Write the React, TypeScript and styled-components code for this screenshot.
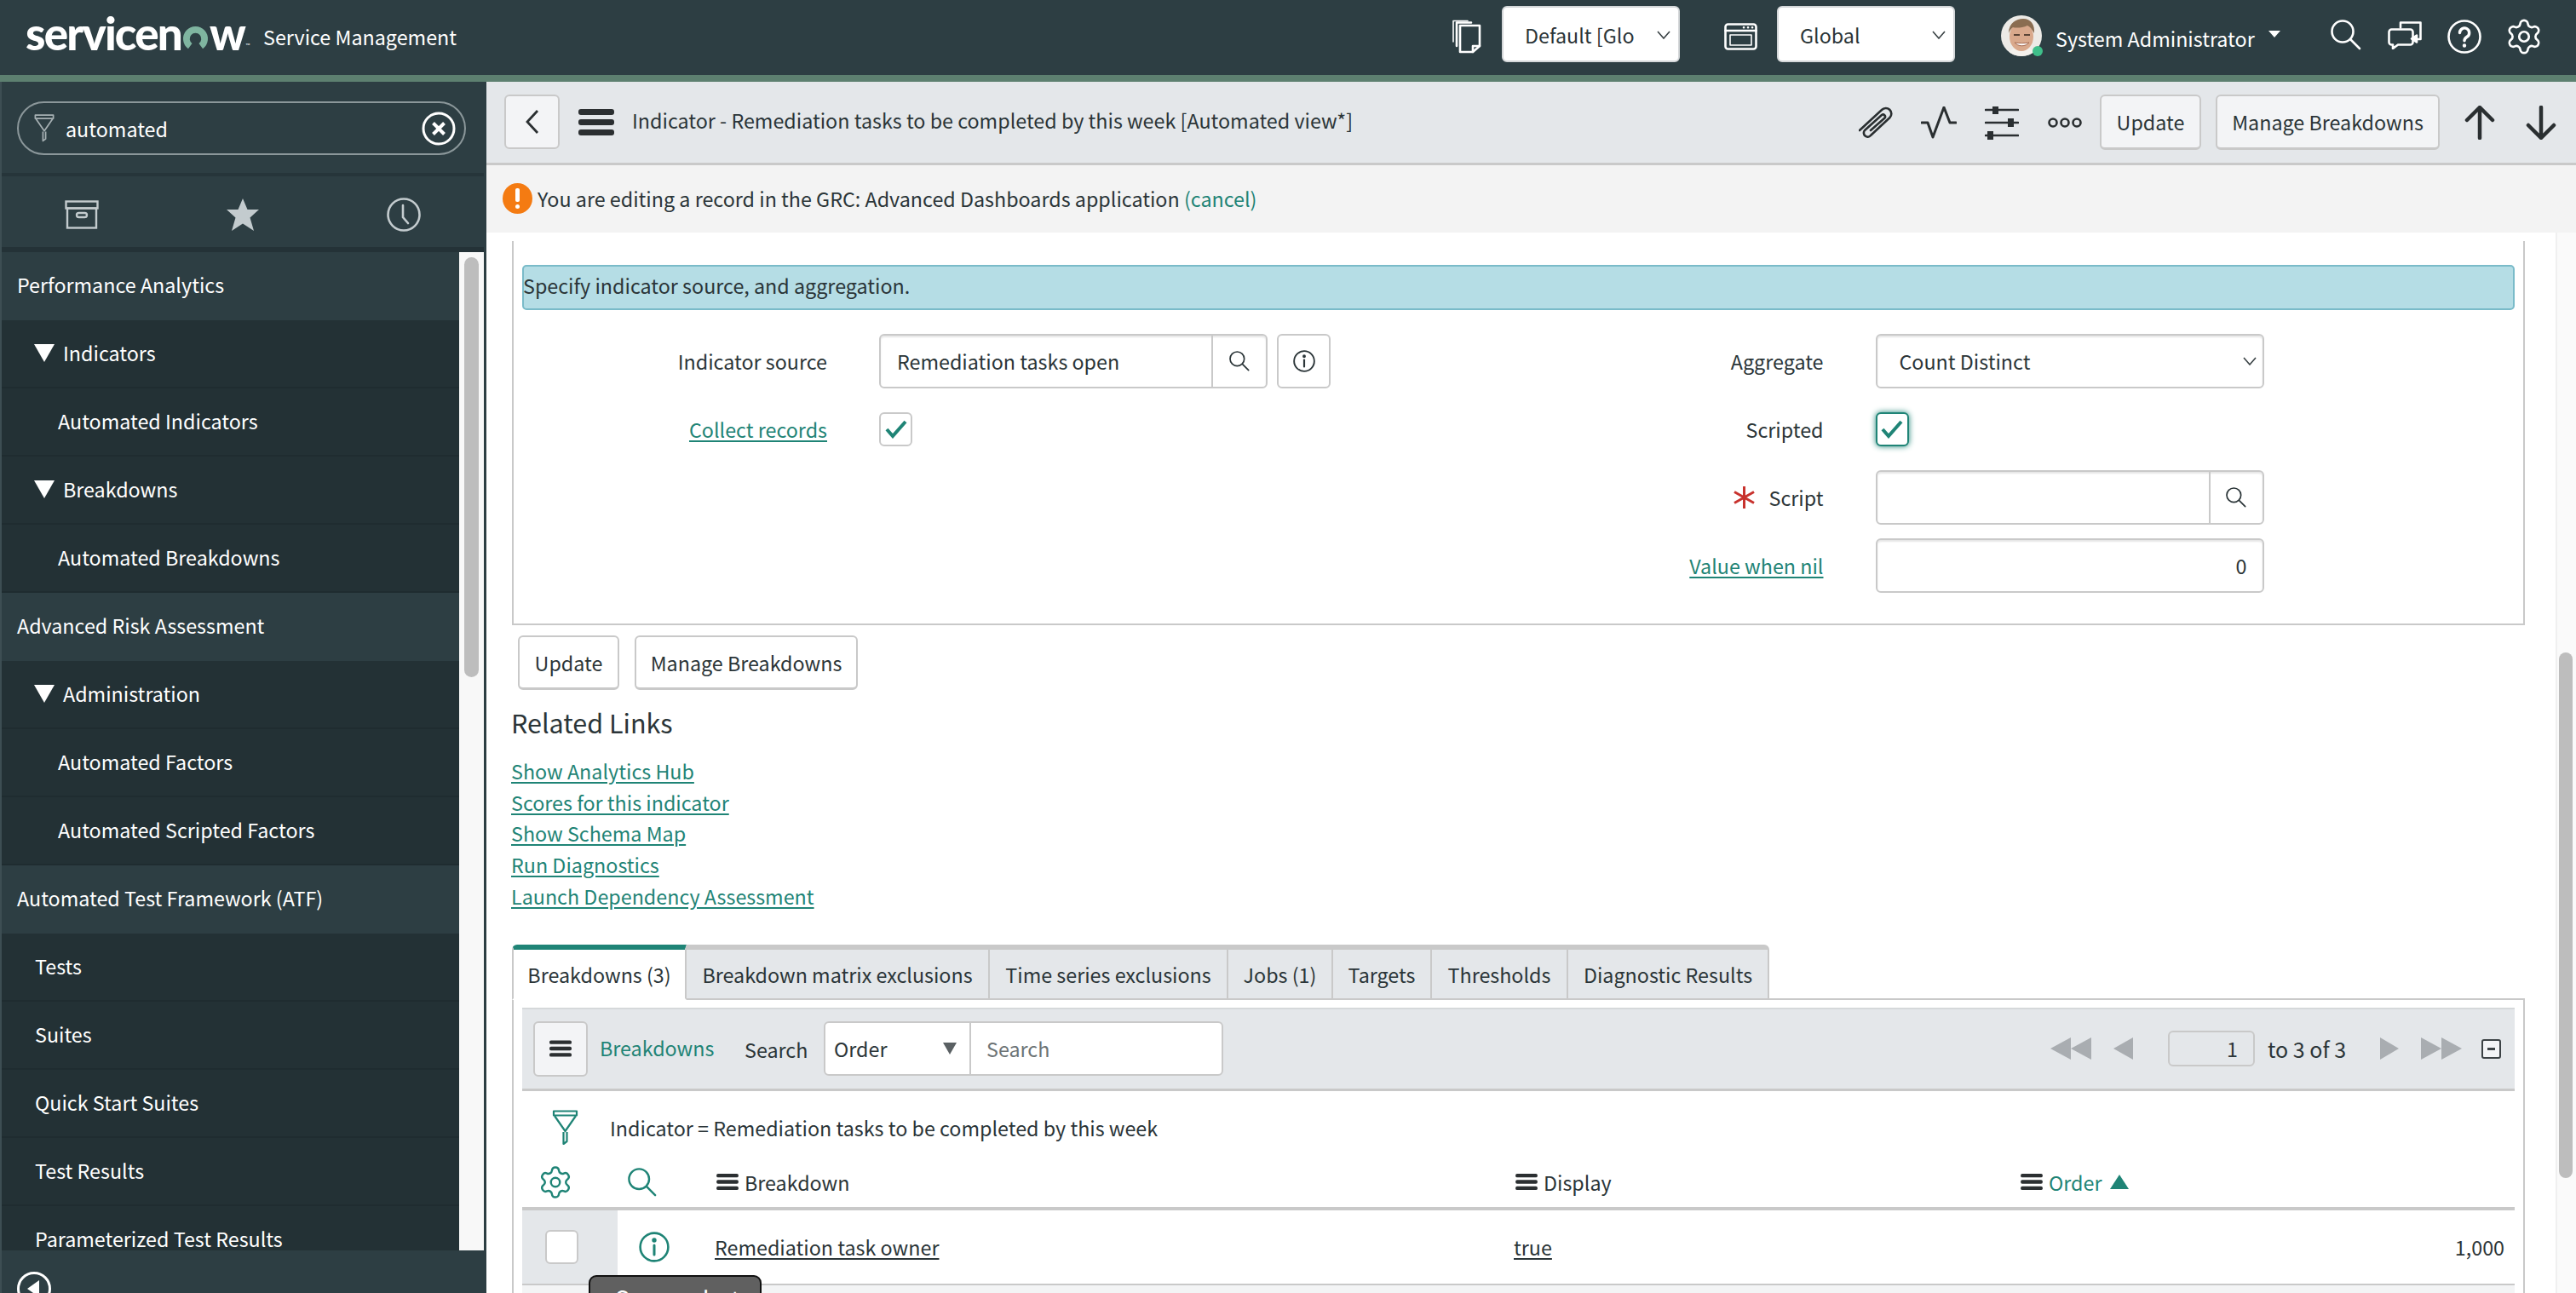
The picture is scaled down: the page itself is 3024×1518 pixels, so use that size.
import styled, { createGlobalStyle } from "styled-components";
import { Settings } from "lucide-react";

const font = `"Noto Sans CJK SC", "Source Sans Pro", Lato, sans-serif`;
const teal = "#1f8476";
const ink = "#2b3538";
const line = "#c9c9c9";
const barBg = "#e4e7ea";

const GlobalStyle = createGlobalStyle`
  html, body { margin: 0; padding: 0; background: #fff; }
  * { box-sizing: border-box; }
  body { font-family: ${font}; font-size: 23.3px; line-height: 36px; color: ${ink}; }
`;

const Shell = styled.div`
  width: 3024px;
  height: 1518px;
  display: flex;
  flex-direction: column;
  overflow: hidden;
`;

/* top bar */
const TopBar = styled.header`
  height: 96px;
  flex: none;
  background: #2d3e43;
  border-bottom: 8px solid #5d8070;
  display: flex;
  align-items: center;
  color: #fff;
  padding-left: 30px;
`;
const Logo = styled.div`
  font-family: Lato, sans-serif;
  font-weight: 900;
  font-size: 53px;
  line-height: 60px;
  letter-spacing: -1.8px;
  display: flex;
  align-items: baseline;
  width: 279px;
  margin-top: -10px;
  sup {
    font-size: 7px;
    line-height: 7px;
    font-weight: 400;
    letter-spacing: 0;
    align-self: flex-end;
    margin: 0 0 12px 1px;
  }
`;
const ProductName = styled.div`
  margin-top: -2px;
`;
const Spacer = styled.div`
  flex: 1;
`;
const HeaderSelect = styled.div<{ $w: number; $ml: number }>`
  width: ${(p) => p.$w}px;
  height: 66px;
  margin-left: ${(p) => p.$ml}px;
  margin-top: -8px;
  background: #fff;
  border-radius: 6px;
  border: 2px solid #d4d7d9;
  color: ${ink};
  display: flex;
  align-items: center;
  justify-content: space-between;
  padding: 2px 9px 0 25px;
`;
const HeaderGlyph = styled.svg<{ $ml?: number }>`
  flex: none;
  margin-left: ${(p) => p.$ml ?? 0}px;
  margin-top: -3px;
  fill: none;
  stroke: #fff;
  stroke-width: 2.6;
  stroke-linecap: round;
  stroke-linejoin: round;
`;
const AvatarWrap = styled.div`
  position: relative;
  width: 48px;
  height: 48px;
  flex: none;
  margin: -4px 0 0 54px;
`;
const StatusDot = styled.span`
  position: absolute;
  right: -1px;
  bottom: 0;
  width: 12px;
  height: 12px;
  border-radius: 50%;
  background: #3fbf8a;
`;
const UserName = styled.div`
  margin: 2px 0 0 16px;
  width: 250px;
  white-space: nowrap;
`;
const Caret = styled.div`
  width: 0;
  height: 0;
  border-left: 7.5px solid transparent;
  border-right: 7.5px solid transparent;
  border-top: 8px solid #fff;
  margin-top: -9px;
`;

/* body */
const Body = styled.div`
  flex: 1;
  min-height: 0;
  display: flex;
`;
const Sidebar = styled.aside`
  width: 571px;
  flex: none;
  background: #2d3e43;
  border-left: 2px solid #3d4e53;
  display: flex;
  flex-direction: column;
  padding-right: 3px;
  color: #fff;
`;
const FilterArea = styled.div`
  height: 111px;
  flex: none;
  padding: 23px 21px 0 18px;
  border-bottom: 4px solid #26353a;
`;
const FilterPill = styled.div`
  height: 63px;
  border: 2px solid #8b979a;
  border-radius: 32px;
  display: flex;
  align-items: center;
  padding: 0 10px 0 15px;
`;
const FilterText = styled.div`
  flex: 1;
  padding: 0 0 0 10px;
`;
const SideTabs = styled.div`
  height: 89px;
  flex: none;
  display: grid;
  grid-template-columns: repeat(3, 1fr);
  align-items: center;
  justify-items: center;
  padding-top: 6px;
  border-bottom: 6px solid #243237;
`;
const NavRegion = styled.div`
  flex: 1;
  min-height: 0;
  display: flex;
`;
const NavList = styled.nav`
  flex: 1;
  min-width: 0;
  overflow: hidden;
`;
const NavRow = styled.div<{ $kind: "section" | "arrow" | "leaf" | "plain" }>`
  height: 80px;
  display: flex;
  align-items: center;
  gap: 10px;
  white-space: nowrap;
  line-height: 28px;
  padding-bottom: 2px;
  padding-left: ${(p) =>
    ({ section: 18, arrow: 38, leaf: 66, plain: 39 })[p.$kind]}px;
  background: ${(p) => (p.$kind === "section" ? "#2d3e43" : "#233135")};
  border-bottom: 2px solid ${(p) => (p.$kind === "section" ? "#2d3e43" : "#1f2c30")};
`;
const NavArrow = styled.span`
  width: 0;
  height: 0;
  border-left: 12px solid transparent;
  border-right: 12px solid transparent;
  border-top: 21px solid #fff;
`;
const NavTrack = styled.div`
  width: 29px;
  flex: none;
  background: #f8f8f8;
  padding: 6px 6px 0;
`;
const NavThumb = styled.div`
  width: 17px;
  height: 493px;
  background: #bdbdbd;
  border-radius: 9px;
`;
const SideFooter = styled.div`
  height: 50px;
  flex: none;
  padding: 25px 0 0 18px;
  overflow: hidden;
`;

/* main column */
const Main = styled.main`
  flex: 1;
  min-width: 0;
  display: flex;
  flex-direction: column;
`;
const FormBar = styled.div`
  height: 98px;
  flex: none;
  background: ${barBg};
  border-bottom: 3px solid ${line};
  display: flex;
  align-items: center;
  padding-left: 21px;
`;
const BackButton = styled.div`
  width: 65px;
  height: 64px;
  background: #f3f4f6;
  border: 2px solid ${line};
  border-radius: 6px;
  display: flex;
  align-items: center;
  justify-content: center;
  margin-top: -1px;
`;
const MenuSlot = styled.span`
  margin-left: 22px;
  display: flex;
`;
const FormTitle = styled.div`
  margin: -5px 0 0 21px;
  white-space: nowrap;
`;
const BarIcon = styled.svg<{ $ml: number }>`
  flex: none;
  margin-left: ${(p) => p.$ml}px;
  fill: none;
  stroke: #2a2f31;
  stroke-width: 2.6;
  stroke-linecap: round;
  stroke-linejoin: round;
`;
const Button = styled.div<{ $w: number; $ml?: number; $flat?: boolean }>`
  width: ${(p) => p.$w}px;
  height: ${(p) => (p.$flat ? 65 : 64)}px;
  flex: none;
  margin-left: ${(p) => p.$ml ?? 0}px;
  background: ${(p) => (p.$flat ? "#f3f4f6" : "#fff")};
  border: 2px solid ${line};
  border-bottom-width: 3px;
  border-radius: 6px;
  display: flex;
  align-items: center;
  justify-content: center;
  white-space: nowrap;
`;
const AlertBar = styled.div`
  height: 79px;
  flex: none;
  background: #f3f3f3;
  display: flex;
  align-items: center;
  padding: 0 0 2px 19px;
  gap: 6px;
  white-space: nowrap;
`;
const AlertDot = styled.div`
  width: 35px;
  height: 36px;
  border-radius: 50%;
  background: #f47b12;
  display: flex;
  flex-direction: column;
  align-items: center;
  justify-content: center;
  gap: 3px;
  &::before {
    content: "";
    width: 5px;
    height: 16px;
    border-radius: 2px;
    background: #fff;
  }
  &::after {
    content: "";
    width: 5px;
    height: 5px;
    border-radius: 50%;
    background: #fff;
  }
`;
const Link = styled.a`
  color: ${teal};
  text-decoration: underline;
  text-underline-offset: 3px;
`;
const PlainLink = styled.a`
  color: ${teal};
`;
const Workspace = styled.div`
  flex: 1;
  min-height: 0;
  display: flex;
`;
const Page = styled.div`
  flex: 1;
  min-width: 0;
  overflow: hidden;
  padding: 10px 36px 0 30px;
`;
const PageTrack = styled.div`
  width: 24px;
  flex: none;
  background: #fafafa;
  border-left: 2px solid #f0f0f0;
  padding: 493px 4px 0 2px;
`;
const PageThumb = styled.div`
  height: 617px;
  background: #bdbdbd;
  border-radius: 8px;
`;

/* form section */
const Section = styled.section`
  border: 2px solid ${line};
  border-top: 0;
  padding: 28px 10px 36px;
`;
const Banner = styled.div`
  height: 53px;
  background: #b5dde5;
  border: 2px solid #7abbc9;
  border-radius: 5px;
  display: flex;
  align-items: center;
  padding-bottom: 5px;
  margin-bottom: 28px;
  text-indent: -1px;
`;
const Columns = styled.div`
  display: grid;
  grid-template-columns: 1fr 1fr;
`;
const Field = styled.div`
  display: grid;
  grid-template-columns: 358px 1fr;
  column-gap: 61px;
  align-items: center;
  height: 64px;
  margin-bottom: 16px;
  &:last-child {
    margin-bottom: 0;
  }
`;
const Label = styled.div`
  display: flex;
  justify-content: flex-end;
  align-items: center;
  gap: 16px;
`;
const Control = styled.div`
  display: flex;
  align-items: center;
`;
const Input = styled.div<{ $right?: boolean; $pad?: number }>`
  width: 456px;
  height: 64px;
  border: 2px solid ${line};
  border-radius: 6px;
  box-shadow: inset 0 2px 2px #e6e6e6;
  display: flex;
  align-items: center;
  justify-content: ${(p) => (p.$right ? "flex-end" : "space-between")};
  padding: ${(p) => (p.$right ? "0 18px 0 0" : `0 0 0 ${p.$pad ?? 19}px`)};
`;
const Lookup = styled.div<{ $w: number }>`
  width: ${(p) => p.$w}px;
  align-self: stretch;
  border-left: 2px solid ${line};
  display: flex;
  align-items: center;
  justify-content: center;
`;
const SelectArrow = styled.span`
  margin-right: 7px;
  display: flex;
`;
const InfoButton = styled.div`
  width: 63px;
  height: 64px;
  margin-left: 11px;
  border: 2px solid ${line};
  border-radius: 6px;
  display: flex;
  align-items: center;
  justify-content: center;
`;
const Checkbox = styled.div<{ $focus?: boolean }>`
  width: 39px;
  height: 40px;
  background: #fff;
  border-radius: 6px;
  border: ${(p) => (p.$focus ? `2.5px solid ${teal}` : `2px solid ${line}`)};
  box-shadow: ${(p) => (p.$focus ? `0 0 7px ${teal}` : "none")};
  display: flex;
  align-items: center;
  justify-content: center;
`;
const FormActions = styled.div`
  display: flex;
  gap: 18px;
  margin: 12px 0 0 7px;
`;
const RelatedTitle = styled.h2`
  margin: 15px 0 0 -1px;
  font-size: 30.5px;
  font-weight: 400;
  line-height: 46px;
`;
const RelatedList = styled.div`
  display: flex;
  flex-direction: column;
  margin: 16px 0 38px -1px;
  align-items: flex-start;
  line-height: 36.7px;
`;

/* related list */
const TabRow = styled.div`
  display: flex;
  margin-bottom: -2px;
  position: relative;
`;
const Tab = styled.div<{ $active?: boolean; $w: number }>`
  width: ${(p) => p.$w}px;
  height: 65px;
  display: flex;
  align-items: center;
  justify-content: center;
  white-space: nowrap;
  padding-top: 1px;
  background: ${(p) => (p.$active ? "#fff" : barBg)};
  border-top: 6px solid ${(p) => (p.$active ? teal : line)};
  border-right: 2px solid ${line};
  border-left: ${(p) => (p.$active ? `2px solid ${line}` : "0")};
  border-bottom: 2px solid ${(p) => (p.$active ? "#fff" : line)};
  border-radius: ${(p) => (p.$active ? "6px 0 0 0" : "0")};
  &:last-child {
    border-top-right-radius: 6px;
  }
`;
const Panel = styled.div`
  border: 2px solid ${line};
  border-bottom: 0;
  padding: 9px 10px 0;
  height: 500px;
`;
const ListBar = styled.div`
  height: 98px;
  background: ${barBg};
  border-top: 2px solid #d5d8da;
  border-bottom: 3px solid ${line};
  display: flex;
  align-items: center;
  padding-left: 13px;
`;
const MenuButton = styled.div`
  width: 64px;
  height: 65px;
  background: #f3f4f6;
  border: 2px solid ${line};
  border-radius: 6px;
  display: flex;
  align-items: center;
  justify-content: center;
`;
const ListName = styled.a`
  color: ${teal};
  margin: -2px 0 0 14px;
  width: 170px;
`;
const SearchLabel = styled.div`
  margin-top: 2px;
  width: 93px;
`;
const SearchGroup = styled.div`
  width: 469px;
  height: 64px;
  background: #fff;
  border: 2px solid ${line};
  border-radius: 6px;
  display: flex;
  align-items: stretch;
`;
const OrderSelect = styled.div`
  width: 171px;
  border-right: 2px solid ${line};
  display: flex;
  align-items: center;
  justify-content: space-between;
  padding: 0 15px 0 10px;
`;
const SearchHint = styled.div`
  display: flex;
  align-items: center;
  padding-left: 18px;
  color: #6d7476;
`;
const Triangle = styled.span<{ $dir: "left" | "right" | "down" | "up"; $c: string; $w: number; $h: number; $ml?: number }>`
  display: inline-block;
  flex: none;
  width: 0;
  height: 0;
  margin-left: ${(p) => p.$ml ?? 0}px;
  ${(p) =>
    p.$dir === "left" || p.$dir === "right"
      ? `border-top: ${p.$h / 2}px solid transparent;
         border-bottom: ${p.$h / 2}px solid transparent;
         border-${p.$dir === "left" ? "right" : "left"}: ${p.$w}px solid ${p.$c};`
      : `border-left: ${p.$w / 2}px solid transparent;
         border-right: ${p.$w / 2}px solid transparent;
         border-${p.$dir === "down" ? "top" : "bottom"}: ${p.$h}px solid ${p.$c};`}
`;
const PageInput = styled.div`
  width: 102px;
  height: 42px;
  margin-left: 41px;
  border: 2px solid ${line};
  border-radius: 6px;
  background: ${barBg};
  display: flex;
  align-items: center;
  justify-content: flex-end;
  padding-right: 18px;
`;
const PageCount = styled.div`
  margin-left: 15px;
  width: 132px;
  font-size: 25px;
  white-space: nowrap;
`;
const CollapseBox = styled.div`
  width: 23px;
  height: 23px;
  margin: 0 16px 0 23px;
  border: 2px solid #3c4245;
  border-radius: 3px;
  background: #f3f4f6;
  display: flex;
  align-items: center;
  justify-content: center;
  &::before {
    content: "";
    width: 9px;
    height: 3px;
    background: #3c4245;
  }
`;
const Breadcrumb = styled.div`
  height: 86px;
  display: flex;
  align-items: center;
  padding: 0 0 0 32px;
  gap: 34px;
`;
const tableColumns = "112px 114px 938px 593px 1fr";
const HeadRow = styled.div`
  display: grid;
  grid-template-columns: ${tableColumns};
  height: 54px;
  align-items: center;
  border-bottom: 4px solid ${line};
  padding-bottom: 14px;
`;
const HeadCell = styled.div<{ $active?: boolean }>`
  display: flex;
  align-items: center;
  gap: 7px;
  padding-left: 2px;
  color: ${(p) => (p.$active ? teal : ink)};
`;
const IconCell = styled.div<{ $ml: number }>`
  padding-left: ${(p) => p.$ml}px;
  display: flex;
  align-items: center;
`;
const DataRow = styled.div`
  display: grid;
  grid-template-columns: ${tableColumns};
  height: 88px;
  align-items: center;
  border-bottom: 2px solid ${line};
`;
const CheckCell = styled.div`
  align-self: stretch;
  background: ${barBg};
  display: flex;
  align-items: center;
  padding-left: 27px;
`;
const RowLink = styled.a`
  color: ${ink};
  text-decoration: underline;
  text-underline-offset: 3px;
`;
const NumberCell = styled.div`
  text-align: right;
  padding-right: 12px;
`;
const NextRow = styled.div`
  height: 20px;
  background: #f3f4f5;
  position: relative;
`;
const Tooltip = styled.div`
  position: absolute;
  left: 78px;
  top: -12px;
  width: 203px;
  height: 60px;
  background: #606060;
  border: 2px solid #111;
  border-radius: 9px;
  color: #fff;
  font-size: 28px;
  line-height: 36px;
  padding: 7px 0 0 29px;
`;

/* drawn icons */
const Funnel = ({ color, w, h }: { color: string; w: number; h: number }) => (
  <svg width={w} height={h} viewBox="0 0 30 42" fill="none" stroke={color} strokeWidth="2.2" strokeLinejoin="round">
    <path d="M1.5 1.5h27v5h-27z" />
    <path d="M2.5 7 15 25 27.5 7" />
    <path d="M13 26v14l4-3V26" />
  </svg>
);
const Bars = ({ w, h, color = "#2b2f31" }: { w: number; h: number; color?: string }) => (
  <svg width={w} height={h} viewBox="0 0 42 31" fill={color}>
    <rect width="42" height="7" rx="3" />
    <rect y="12" width="42" height="7" rx="3" />
    <rect y="24" width="42" height="7" rx="3" />
  </svg>
);
const Magnifier = ({ size, color = "currentColor", sw = 1.7 }: { size: number; color?: string; sw?: number }) => (
  <svg width={size} height={size} viewBox="0 0 36 36" fill="none" stroke={color} strokeWidth={sw * 1.5} strokeLinecap="round">
    <circle cx="14" cy="14" r="12.5" />
    <path d="M23.5 23.5 34 34" />
  </svg>
);
const Info = ({ size, color = "currentColor" }: { size: number; color?: string }) => (
  <svg width={size} height={size} viewBox="0 0 36 36" fill="none" stroke={color} strokeWidth="2.6" strokeLinecap="round">
    <circle cx="18" cy="18" r="16.4" />
    <path d="M18 16v11" strokeWidth="3" />
    <circle cx="18" cy="10" r="1.4" fill={color} />
  </svg>
);
const Check = () => (
  <svg width="26" height="22" viewBox="0 0 26 22" fill="none" stroke={teal} strokeWidth="4">
    <path d="M2 11l7 8L24 2" />
  </svg>
);
const Chevron = () => (
  <svg width="16" height="10" viewBox="0 0 16 10" fill="none" stroke="#3a4245" strokeWidth="1.6">
    <path d="M1 1l7 8 7-8" />
  </svg>
);

const navRows: { text: string; kind: "section" | "arrow" | "leaf" | "plain" }[] = [
  { text: "Performance Analytics", kind: "section" },
  { text: "Indicators", kind: "arrow" },
  { text: "Automated Indicators", kind: "leaf" },
  { text: "Breakdowns", kind: "arrow" },
  { text: "Automated Breakdowns", kind: "leaf" },
  { text: "Advanced Risk Assessment", kind: "section" },
  { text: "Administration", kind: "arrow" },
  { text: "Automated Factors", kind: "leaf" },
  { text: "Automated Scripted Factors", kind: "leaf" },
  { text: "Automated Test Framework (ATF)", kind: "section" },
  { text: "Tests", kind: "plain" },
  { text: "Suites", kind: "plain" },
  { text: "Quick Start Suites", kind: "plain" },
  { text: "Test Results", kind: "plain" },
  { text: "Parameterized Test Results", kind: "plain" },
];

const relatedLinks = [
  "Show Analytics Hub",
  "Scores for this indicator",
  "Show Schema Map",
  "Run Diagnostics",
  "Launch Dependency Assessment",
];

const tabs = [
  { label: "Breakdowns (3)", w: 205 },
  { label: "Breakdown matrix exclusions", w: 356 },
  { label: "Time series exclusions", w: 280 },
  { label: "Jobs (1)", w: 123 },
  { label: "Targets", w: 116 },
  { label: "Thresholds", w: 160 },
  { label: "Diagnostic Results", w: 236 },
];

export default function App() {
  return (
    <Shell>
      <GlobalStyle />
      <TopBar>
        <Logo>
          servicen
          <svg width="33" height="29" viewBox="0 0 34 30" fill="none" stroke="#7fb5a0" strokeWidth="8" style={{ marginBottom: -1 }}>
            <path d="M10.5 24.9A11 11 0 1 1 23.5 24.9" />
          </svg>
          w<sup>™</sup>
        </Logo>
        <ProductName>Service Management</ProductName>
        <Spacer />
        <HeaderGlyph width="35" height="40" viewBox="0 0 35 40">
          <path d="M6 31V3.5h17" />
          <path d="M2 26V1.5h17" strokeWidth="1.6" />
          <path d="M10 7h23v24l-8 7H10z" />
          <path d="M33 31h-8v7" />
        </HeaderGlyph>
        <HeaderSelect $w={209} $ml={24}>
          Default [Glo
          <Chevron />
        </HeaderSelect>
        <HeaderGlyph width="39" height="32" viewBox="0 0 39 32" $ml={52}>
          <rect x="1.5" y="1.5" width="36" height="29" rx="3" />
          <path d="M1.5 9h36" />
          <rect x="7" y="14" width="25" height="12" strokeWidth="1.6" />
          <path d="M23 5.2h.1M28 5.2h.1M33 5.2h.1" />
        </HeaderGlyph>
        <HeaderSelect $w={209} $ml={23}>
          Global
          <Chevron />
        </HeaderSelect>
        <AvatarWrap>
          <svg width="48" height="48" viewBox="0 0 48 48">
            <clipPath id="face">
              <circle cx="24" cy="24" r="24" />
            </clipPath>
            <g clipPath="url(#face)">
              <rect width="48" height="48" fill="#eceae6" />
              <path d="M8 48c2-9 9-11 16-11s14 2 16 11z" fill="#f4f1ec" />
              <ellipse cx="24" cy="25" rx="14" ry="17" fill="#d9a98c" />
              <path d="M9 21C9 9 18 4 26 4c9 0 14 7 13 17-3-5-5-8-8-9-6 3-14 3-17 2-3 2-4 5-5 7z" fill="#8a6d51" />
              <path d="M15 23h7M27 23h7" stroke="#5a4436" strokeWidth="2" />
              <path d="M16 32c4 5 13 5 17 0-5 1-12 1-17 0z" fill="#fff" stroke="#a56a50" strokeWidth="1" />
            </g>
          </svg>
          <StatusDot />
        </AvatarWrap>
        <UserName>System Administrator</UserName>
        <Caret />
        <HeaderGlyph width="36" height="36" viewBox="0 0 36 36" $ml={59} style={{ marginTop: -7 }}>
          <circle cx="14" cy="14" r="12.5" />
          <path d="M23.5 23.5 34 34" />
        </HeaderGlyph>
        <HeaderGlyph width="40" height="33" viewBox="0 0 40 33" $ml={31} style={{ marginTop: -6 }}>
          <path d="M15 7.5V1.5h23.5V21H34" />
          <path d="M28 20.5l6-4v8z" fill="#fff" />
          <path d="M4.5 9.5h22a3 3 0 0 1 3 3v12a3 3 0 0 1-3 3H12L6 32v-4.5H4.5a3 3 0 0 1-3-3v-12a3 3 0 0 1 3-3z" />
        </HeaderGlyph>
        <HeaderGlyph width="40" height="40" viewBox="0 0 40 40" $ml={30}>
          <circle cx="20" cy="20" r="18.5" />
          <path d="M14.5 15.5a5.6 5.6 0 1 1 8.5 4.8c-2 1.3-3 2.3-3 4.4" strokeWidth="3.4" />
          <circle cx="20" cy="30.5" r="1" strokeWidth="2.4" fill="#fff" />
        </HeaderGlyph>
        <Settings size={46} color="#fff" strokeWidth={1.4} style={{ margin: "-3px 38px 0 27px", flex: "none" }} />
      </TopBar>

      <Body>
        <Sidebar>
          <FilterArea>
            <FilterPill>
              <Funnel color="#a6b0b3" w={30} h={33} />
              <FilterText>automated</FilterText>
              <svg width="40" height="40" viewBox="0 0 40 40" fill="none" stroke="#fff">
                <circle cx="20" cy="20" r="18" strokeWidth="3" />
                <path d="M13.5 13.5l13 13M26.5 13.5l-13 13" strokeWidth="4" />
              </svg>
            </FilterPill>
          </FilterArea>
          <SideTabs>
            <svg width="40" height="34" viewBox="0 0 40 34" fill="none" stroke="#c3cbce" strokeWidth="2.4">
              <rect x="1.5" y="1.5" width="37" height="8" />
              <rect x="3" y="9.5" width="34" height="23" />
              <rect x="14" y="15" width="12" height="5" rx="2.5" />
            </svg>
            <svg width="38" height="38" viewBox="0 0 38 38" fill="#c3cbce">
              <path d="M19 0l5.5 13H38l-10.500 9.500L32 38 19 29.500 6 38l4.500-15.500L0 13h13.500z" />
            </svg>
            <svg width="40" height="40" viewBox="0 0 40 40" fill="none" stroke="#c3cbce" strokeWidth="2.6" strokeLinecap="round">
              <circle cx="20" cy="20" r="18.5" />
              <path d="M19 9v14l6 7" />
            </svg>
          </SideTabs>
          <NavRegion>
            <NavList>
              {navRows.map((row) => (
                <NavRow key={row.text} $kind={row.kind}>
                  {row.kind === "arrow" && <NavArrow />}
                  {row.text}
                </NavRow>
              ))}
            </NavList>
            <NavTrack>
              <NavThumb />
            </NavTrack>
          </NavRegion>
          <SideFooter>
            <svg width="40" height="40" viewBox="0 0 40 40" fill="none" stroke="#fff" strokeWidth="3">
              <circle cx="20" cy="20" r="18.5" />
              <path d="M26 10v20L12 20z" fill="#fff" stroke="none" />
            </svg>
          </SideFooter>
        </Sidebar>

        <Main>
          <FormBar>
            <BackButton>
              <svg width="18" height="30" viewBox="0 0 18 30" fill="none" stroke="#2a2f31" strokeWidth="2.8">
                <path d="M15 2 3 15l12 13" />
              </svg>
            </BackButton>
            <MenuSlot>
              <Bars w={42} h={31} />
            </MenuSlot>
            <FormTitle>Indicator - Remediation tasks to be completed by this week [Automated view*]</FormTitle>
            <Spacer />
            <BarIcon width="40" height="38" viewBox="0 0 40 38" $ml={0}>
              <path d="M1 28 27 4a6.5 6.5 0 0 1 9.500 9L14 34a4.500 4.500 0 0 1-7-6L27 10a2.500 2.500 0 0 1 3.500 3.500L14 28" />
            </BarIcon>
            <BarIcon width="42" height="38" viewBox="0 0 42 38" $ml={33}>
              <path d="M1 19h7l6 17L27 1l7 18h7" strokeWidth="3" />
            </BarIcon>
            <BarIcon width="40" height="40" viewBox="0 0 40 40" $ml={33}>
              <path d="M1 5h38M1 20h38M1 35h38" />
              <rect x="9" y="1" width="7" height="9" fill="#2a2f31" stroke="none" />
              <rect x="27" y="15" width="7" height="10" fill="#2a2f31" stroke="none" />
              <rect x="3" y="30" width="7" height="10" fill="#2a2f31" stroke="none" />
            </BarIcon>
            <BarIcon width="40" height="14" viewBox="0 0 40 14" $ml={34}>
              <circle cx="6" cy="7" r="4.5" />
              <circle cx="20" cy="7" r="4.5" />
              <circle cx="34" cy="7" r="4.5" />
            </BarIcon>
            <Button $w={119} $ml={21} $flat>
              Update
            </Button>
            <Button $w={263} $ml={17} $flat>
              Manage Breakdowns
            </Button>
            <BarIcon width="38" height="40" viewBox="0 0 38 40" $ml={28}>
              <path d="M19 38V3M4 17 19 2l15 15" strokeWidth="4.5" />
            </BarIcon>
            <BarIcon width="38" height="40" viewBox="0 0 38 40" $ml={34} style={{ marginRight: 22 }}>
              <path d="M19 2v35M4 23l15 15 15-15" strokeWidth="4.5" />
            </BarIcon>
          </FormBar>

          <AlertBar>
            <AlertDot />
            <span>
              You are editing a record in the GRC: Advanced Dashboards application <PlainLink>(cancel)</PlainLink>
            </span>
          </AlertBar>

          <Workspace>
            <Page>
              <Section>
                <Banner>Specify indicator source, and aggregation.</Banner>
                <Columns>
                  <div>
                    <Field>
                      <Label>Indicator source</Label>
                      <Control>
                        <Input>
                          Remediation tasks open
                          <Lookup $w={64}>
                            <Magnifier size={24} />
                          </Lookup>
                        </Input>
                        <InfoButton>
                          <Info size={26} />
                        </InfoButton>
                      </Control>
                    </Field>
                    <Field>
                      <Label>
                        <Link>Collect records</Link>
                      </Label>
                      <Control>
                        <Checkbox>
                          <Check />
                        </Checkbox>
                      </Control>
                    </Field>
                  </div>
                  <div>
                    <Field>
                      <Label>Aggregate</Label>
                      <Control>
                        <Input $pad={26}>
                          Count Distinct
                          <SelectArrow>
                            <Chevron />
                          </SelectArrow>
                        </Input>
                      </Control>
                    </Field>
                    <Field>
                      <Label>Scripted</Label>
                      <Control>
                        <Checkbox $focus>
                          <Check />
                        </Checkbox>
                      </Control>
                    </Field>
                    <Field>
                      <Label>
                        <svg width="27" height="26" viewBox="0 0 27 26" fill="none" stroke="#c8322d" strokeWidth="3">
                          <path d="M13.5 0v26M2 6.5l23 13M25 6.5l-23 13" />
                        </svg>
                        Script
                      </Label>
                      <Control>
                        <Input>
                          <span />
                          <Lookup $w={63}>
                            <Magnifier size={24} />
                          </Lookup>
                        </Input>
                      </Control>
                    </Field>
                    <Field>
                      <Label>
                        <Link>Value when nil</Link>
                      </Label>
                      <Control>
                        <Input $right>0</Input>
                      </Control>
                    </Field>
                  </div>
                </Columns>
              </Section>

              <FormActions>
                <Button $w={119}>Update</Button>
                <Button $w={262}>Manage Breakdowns</Button>
              </FormActions>

              <RelatedTitle>Related Links</RelatedTitle>
              <RelatedList>
                {relatedLinks.map((text) => (
                  <Link key={text}>{text}</Link>
                ))}
              </RelatedList>

              <TabRow>
                {tabs.map((tab, i) => (
                  <Tab key={tab.label} $w={tab.w} $active={i === 0}>
                    {tab.label}
                  </Tab>
                ))}
              </TabRow>
              <Panel>
                <ListBar>
                  <MenuButton>
                    <Bars w={26} h={20} />
                  </MenuButton>
                  <ListName>Breakdowns</ListName>
                  <SearchLabel>Search</SearchLabel>
                  <SearchGroup>
                    <OrderSelect>
                      Order
                      <Triangle $dir="down" $c="#5a6063" $w={16} $h={14} />
                    </OrderSelect>
                    <SearchHint>Search</SearchHint>
                  </SearchGroup>
                  <Spacer />
                  <Triangle $dir="left" $c="#a9adb1" $w={24} $h={26} />
                  <Triangle $dir="left" $c="#a9adb1" $w={24} $h={26} />
                  <Triangle $dir="left" $c="#a9adb1" $w={23} $h={26} $ml={26} />
                  <PageInput>1</PageInput>
                  <PageCount>to 3 of 3</PageCount>
                  <Triangle $dir="right" $c="#a9adb1" $w={22} $h={26} />
                  <Triangle $dir="right" $c="#a9adb1" $w={24} $h={26} $ml={26} />
                  <Triangle $dir="right" $c="#a9adb1" $w={24} $h={26} />
                  <CollapseBox />
                </ListBar>
                <Breadcrumb>
                  <Funnel color={teal} w={37} h={42} />
                  <span>Indicator = Remediation tasks to be completed by this week</span>
                </Breadcrumb>
                <HeadRow>
                  <IconCell $ml={18}>
                    <Settings size={42} color={teal} strokeWidth={1.4} />
                  </IconCell>
                  <IconCell $ml={12}>
                    <Magnifier size={34} color={teal} />
                  </IconCell>
                  <HeadCell>
                    <Bars w={26} h={19} />
                    Breakdown
                  </HeadCell>
                  <HeadCell>
                    <Bars w={26} h={19} />
                    Display
                  </HeadCell>
                  <HeadCell $active>
                    <Bars w={26} h={19} />
                    Order
                    <Triangle $dir="up" $c={teal} $w={22} $h={17} $ml={3} />
                  </HeadCell>
                </HeadRow>
                <DataRow>
                  <CheckCell>
                    <Checkbox />
                  </CheckCell>
                  <IconCell $ml={25}>
                    <Info size={36} color={teal} />
                  </IconCell>
                  <RowLink>Remediation task owner</RowLink>
                  <RowLink>true</RowLink>
                  <NumberCell>1,000</NumberCell>
                </DataRow>
                <NextRow>
                  <Tooltip>Screenshot</Tooltip>
                </NextRow>
              </Panel>
            </Page>
            <PageTrack>
              <PageThumb />
            </PageTrack>
          </Workspace>
        </Main>
      </Body>
    </Shell>
  );
}
